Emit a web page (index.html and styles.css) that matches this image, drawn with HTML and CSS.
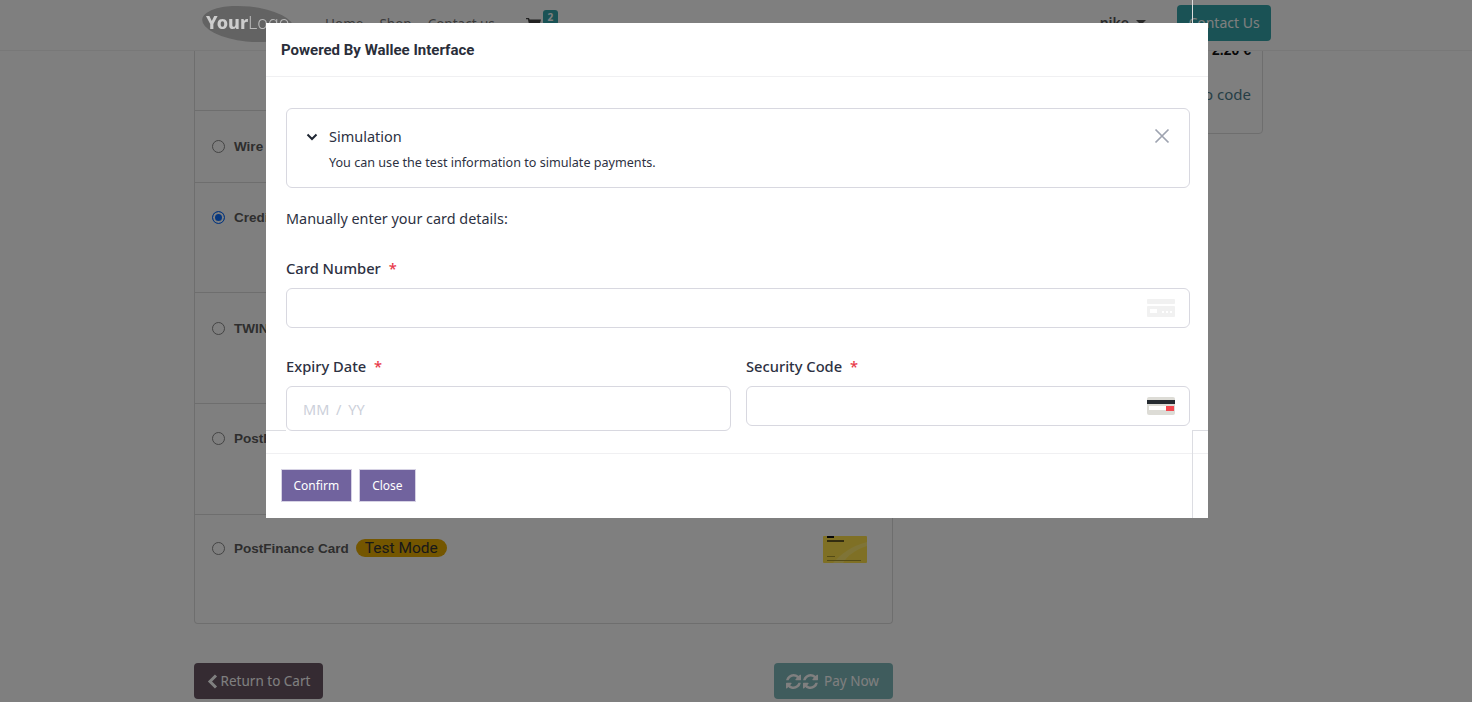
FILE: index.html
```html
<!DOCTYPE html>
<html lang="en">
<head>
    <meta charset="UTF-8">
    <title>Checkout - Payment</title>
    <link rel="stylesheet" href="styles.css">
</head>
<body>
    <header class="site-header">
        <svg class="logo" width="92" height="42" viewBox="0 0 92 42">
            <ellipse cx="46" cy="21" rx="46" ry="17.5" transform="rotate(6 46 21)" fill="#636363"/>
            <text x="4" y="26" class="logo-bold">Your</text>
            <text x="46" y="26" class="logo-thin">Logo</text>
        </svg>
        <nav class="main-nav">
            <a href="#">Home</a>
            <a href="#">Shop</a>
            <a href="#">Contact us</a>
        </nav>
        <div class="cart">
            <svg width="15" height="14" viewBox="0 0 15 14">
                <path d="M0 1h3l.6 1.6H15l-1.6 6H4.6l.3 1.2h8.6v1.2H3.8L1.9 2.2H0z" fill="#444"/>
                <circle cx="5.2" cy="12.6" r="1.3" fill="#444"/>
                <circle cx="12" cy="12.6" r="1.3" fill="#444"/>
            </svg>
            <span class="cart-count">2</span>
        </div>
        <div class="user-menu">nike <span class="caret"></span></div>
        <a class="contact-btn" href="#">Contact Us</a>
    </header>

    <main class="checkout">
        <div class="pay-column">
            <div class="pay-list">
                <div class="pay-row row-first"></div>
                <div class="pay-row row-wire">
                    <span class="radio"></span><b>Wire Transfer</b>
                </div>
                <div class="pay-row row-credit">
                    <span class="radio radio-on"></span><b>Credit Card</b>
                </div>
                <div class="pay-row">
                    <span class="radio"></span><b>TWINT</b>
                </div>
                <div class="pay-row row-post">
                    <span class="radio"></span><b>PostFinance E-Finance</b>
                </div>
                <div class="pay-row row-last">
                    <span class="radio"></span><b>PostFinance Card</b>
                    <span class="test-badge">Test Mode</span>
                    <svg class="pf-card" width="44" height="27" viewBox="0 0 44 27">
                        <rect width="44" height="27" rx="1" fill="#ffe14a"/>
                        <rect x="4" y="0" width="7" height="2" fill="#111"/>
                        <rect x="4" y="4" width="17" height="2" fill="#665a20"/>
                        <path d="M10 27C18 18 28 10 44 6V10C32 14 24 20 20 27z" fill="#ffe96e"/>
                        <rect x="4" y="20" width="8" height="1" fill="#a8962c"/>
                        <rect x="4" y="24" width="34" height="1" fill="#a8962c"/>
                    </svg>
                </div>
            </div>
            <div class="pay-actions">
                <a class="btn-return" href="#">
                    <svg width="11" height="15" viewBox="0 0 11 15"><path d="M9 1.500 3 7.500l6 6" fill="none" stroke="#fff" stroke-width="3"/></svg>
                    Return to Cart
                </a>
                <a class="btn-pay" href="#">
                    <svg width="15" height="15" viewBox="0 0 1536 1536"><use href="#refresh"/></svg>
                    <svg width="15" height="15" viewBox="0 0 1536 1536"><use href="#refresh"/></svg>
                    Pay Now
                </a>
            </div>
        </div>
        <aside class="summary">
            <div class="summary-total"><b>Total</b><b>2.20 €</b></div>
            <a class="promo-link" href="#">I have a promo code</a>
        </aside>
    </main>

    <svg class="svg-defs" width="0" height="0">
        <defs>
            <path id="refresh" fill="#fff" d="M1511 928q0 5-1 7-64 268-268 434.5t-478 166.5q-146 0-282.5-55t-243.5-157l-129 129q-19 19-45 19t-45-19-19-45v-448q0-26 19-45t45-19h448q26 0 45 19t19 45-19 45l-137 137q71 66 161 102t187 36q134 0 250-65t186-179q11-17 53-117 8-23 30-23h192q13 0 22.5 9.5t9.5 22.5zm25-800v448q0 26-19 45t-45 19h-448q-26 0-45-19t-19-45 19-45l138-138q-148-137-349-137-134 0-250 65t-186 179q-11 17-53 117-8 23-30 23h-199q-13 0-22.5-9.5t-9.5-22.5v-7q65-268 270-434.5t480-166.5q146 0 284 55.5t245 156.5l130-129q19-19 45-19t45 19 19 45z"/>
        </defs>
    </svg>

    <div class="backdrop"></div>
    <span class="frame-line-top"></span>

    <div class="modal">
        <div class="modal-header">Powered By Wallee Interface</div>
        <div class="modal-body">
            <div class="sim-box">
                <svg class="sim-chevron" width="12" height="8" viewBox="0 0 12 8"><path d="M1.500 1.500 6 6l4.500-4.500" fill="none" stroke="#1f2733" stroke-width="2"/></svg>
                <div class="sim-text">
                    <div class="sim-title">Simulation</div>
                    <div class="sim-note">You can use the test information to simulate payments.</div>
                </div>
                <svg class="sim-close" width="16" height="16" viewBox="0 0 16 16"><path d="M1.500 1.500l13 13m0-13-13 13" fill="none" stroke="#9ea3b0" stroke-width="1.700"/></svg>
            </div>
            <p class="manual-note">Manually enter your card details:</p>
            <label class="field-label">Card Number <em>*</em></label>
            <div class="input-wrap">
                <input class="field-input" type="text">
                <svg class="input-icon" width="28" height="18" viewBox="0 0 28 18">
                    <rect width="28" height="5" rx="1" fill="#f1f1f1"/>
                    <rect y="7" width="28" height="11" rx="1" fill="#f1f1f1"/>
                    <rect x="3" y="10" width="7" height="4" fill="#fff"/>
                    <rect x="15" y="12" width="2" height="2" fill="#fff"/>
                    <rect x="19" y="12" width="2" height="2" fill="#fff"/>
                    <rect x="23" y="12" width="2" height="2" fill="#fff"/>
                </svg>
            </div>
            <div class="field-cols">
                <div class="field-col">
                    <label class="field-label">Expiry Date <em>*</em></label>
                    <input class="field-input input-tall" type="text" placeholder="MM / YY">
                </div>
                <div class="field-col">
                    <label class="field-label">Security Code <em>*</em></label>
                    <div class="input-wrap">
                        <input class="field-input" type="text">
                        <svg class="input-icon" width="28" height="18" viewBox="0 0 28 18">
                            <rect width="28" height="18" rx="2" fill="#dddcd6"/>
                            <rect y="3" width="28" height="4" fill="#252a30"/>
                            <rect x="2" y="9" width="18" height="4" fill="#fff"/>
                            <rect x="19" y="9" width="8" height="5" fill="#f4474f"/>
                        </svg>
                    </div>
                </div>
            </div>
        </div>
        <div class="modal-footer">
            <button class="btn-modal" type="button">Confirm</button>
            <button class="btn-modal btn-close" type="button">Close</button>
        </div>
        <span class="frame-edge"></span>
        <span class="frame-edge-left"></span>
    </div>
</body>
</html>
```

FILE: styles.css
```css
* {
    box-sizing: border-box;
}
html, body {
    height: 100%;
}
body {
    margin: 0;
    overflow: hidden;
    background: #fff;
    color: #333;
    font-family: "Noto Sans", sans-serif;
    font-size: 14px;
}
a {
    text-decoration: none;
}

/* page behind the dialog */
.site-header {
    position: relative;
    display: flex;
    align-items: center;
    height: 51px;
    padding: 0 201px 5px 202px;
    border-bottom: 1px solid #f0f0f0;
    background: #fff;
}
.logo {
    position: relative;
    z-index: 3;
    flex: none;
    margin-top: 3px;
}
.logo-bold {
    font-family: "Noto Sans", sans-serif;
    font-size: 18px;
    font-weight: 800;
    fill: #cdcdcd;
}
.logo-thin {
    font-family: "Noto Sans", sans-serif;
    font-size: 18px;
    font-weight: 300;
    fill: #b8b8b8;
}
.main-nav {
    display: flex;
    gap: 16px;
    margin: 2px 0 0 31px;
    font-size: 13.500px;
}
.main-nav a {
    color: #777;
}
.cart {
    display: flex;
    align-items: flex-start;
    gap: 2px;
    align-self: flex-start;
    margin-left: 31px;
    padding-top: 10px;
}
.cart svg {
    margin-top: 7px;
}
.cart-count {
    width: 15px;
    height: 15px;
    border-radius: 3px;
    background: #35a5aa;
    color: #fff;
    font-size: 10px;
    font-weight: 700;
    line-height: 15px;
    text-align: center;
}
.user-menu {
    display: flex;
    align-items: center;
    gap: 7px;
    margin-left: auto;
    margin-right: 31px;
    font-weight: 600;
    color: #555;
}
.caret {
    border-top: 5px solid #555;
    border-left: 5px solid transparent;
    border-right: 5px solid transparent;
}
.contact-btn {
    width: 94px;
    height: 36px;
    border-radius: 4px;
    background: #35a5aa;
    color: #fff;
    font-size: 14px;
    line-height: 36px;
    text-align: center;
}
.checkout {
    display: flex;
    align-items: flex-start;
    padding: 0 209px 0 194px;
}
.pay-column {
    width: 699px;
}
.pay-list {
    border: 1px solid #ddd;
    border-top: 0;
    border-radius: 0 0 4px 4px;
}
.pay-row {
    position: relative;
    display: flex;
    align-items: flex-start;
    height: 111px;
    padding: 25px 17px 0;
    border-bottom: 1px solid #ddd;
    font-family: "Liberation Sans", Arial, sans-serif;
    font-size: 13.500px;
    line-height: 20px;
}
.pay-row b {
    margin-top: 1px;
    color: #5c5c5c;
}
.row-first {
    height: 60px;
}
.row-wire {
    height: 72px;
}
.row-credit {
    height: 110px;
    padding-top: 24px;
}
.row-post {
    padding-top: 24px;
}
.row-last {
    height: 108px;
    padding-top: 23px;
    border-bottom: 0;
}
.radio {
    width: 13px;
    height: 13px;
    margin: 4px 9px 0 0;
    border: 1px solid #888;
    border-radius: 50%;
    background: #fff;
}
.radio-on {
    border-color: #0d6efd;
    background: #0d6efd;
    box-shadow: inset 0 0 0 2px #fff;
}
.test-badge {
    height: 18px;
    margin: 1px 0 0 7px;
    padding: 0 9px;
    border-radius: 9px;
    background: #e8ac00;
    color: #333;
    font-family: Roboto, sans-serif;
    font-size: 15.500px;
    line-height: 18px;
}
.pf-card {
    position: absolute;
    top: 21px;
    left: 628px;
}
.pay-actions {
    display: flex;
    justify-content: space-between;
    margin-top: 39px;
}
.btn-return, .btn-pay {
    display: flex;
    align-items: center;
    justify-content: center;
    height: 36px;
    border-radius: 4px;
    color: #fff;
    font-size: 13.500px;
}
.btn-return {
    gap: 3px;
    width: 129px;
    background: #6a5665;
}
.btn-pay {
    justify-content: flex-start;
    gap: 2px;
    width: 119px;
    padding-left: 12px;
    background: #7fb8ba;
}
.btn-pay svg:last-of-type {
    margin-right: 4px;
}
.summary {
    width: 331px;
    height: 134px;
    margin-left: auto;
    margin-top: -51px;
    padding: 39px 11px 0;
    border: 1px solid #ddd;
    border-radius: 4px;
}
.summary-total {
    display: flex;
    justify-content: space-between;
    font-family: "Liberation Sans", Arial, sans-serif;
    line-height: 20px;
    color: #111;
}
.promo-link {
    display: block;
    margin-top: 24px;
    color: #4d7d8c;
    font-size: 15px;
    text-align: right;
}

.svg-defs {
    position: absolute;
}

/* dialog */
.backdrop {
    position: fixed;
    inset: 0;
    z-index: 2;
    background: rgba(0, 0, 0, .5);
}
.frame-line-top {
    position: fixed;
    z-index: 3;
    top: 0;
    left: 1192px;
    width: 1px;
    height: 23px;
    background: #ddd;
}
.modal {
    position: fixed;
    z-index: 4;
    top: 23px;
    left: 266px;
    width: 942px;
    height: 495px;
    background: #fff;
    overflow: hidden;
    color: #2d3142;
}
.modal-header {
    height: 54px;
    padding-left: 15px;
    border-bottom: 1px solid #f0f0f2;
    font-family: Roboto, sans-serif;
    font-size: 15px;
    font-weight: 700;
    line-height: 54px;
    color: #2a2e3a;
}
.modal-body {
    height: 376px;
    padding: 31px 18px 0 20px;
    overflow: hidden;
}
.sim-box {
    display: flex;
    align-items: flex-start;
    height: 80px;
    padding: 17px 19px 0 20px;
    border: 1px solid #d8d8e0;
    border-radius: 6px;
}
.sim-chevron {
    flex: none;
    margin: 7px 0 0 -1px;
}
.sim-text {
    flex: 1;
    margin-left: 11px;
}
.sim-title {
    font-size: 14.500px;
    line-height: 20px;
}
.sim-note {
    margin-top: 8px;
    font-size: 12.600px;
    line-height: 18px;
}
.sim-close {
    margin-top: 2px;
}
.manual-note {
    margin: 21px 0 0;
    font-size: 14.400px;
    line-height: 20px;
}
.field-label {
    display: block;
    margin: 29px 0 10px;
    font-size: 14.700px;
    font-weight: 500;
    line-height: 20px;
}
.field-label em {
    margin-left: 4px;
    color: #e8394a;
    font-style: normal;
}
.input-wrap {
    position: relative;
}
.field-input {
    display: block;
    width: 100%;
    height: 40px;
    padding: 0 16px;
    border: 1px solid #d8d8e0;
    border-radius: 6px;
    background: #fff;
    font-family: "Noto Sans", sans-serif;
    font-size: 14.500px;
}
.field-input::placeholder {
    color: #ccd0da;
    word-spacing: 3px;
}
.input-tall {
    height: 45px;
}
.input-icon {
    position: absolute;
    top: 11px;
    right: 15px;
}
.field-cols {
    display: flex;
    gap: 15px;
}
.field-cols .field-label {
    margin: 28px 0 10px;
}
.field-col {
    width: 445px;
}
.field-col + .field-col {
    width: 444px;
}
.modal-footer {
    display: flex;
    gap: 7px;
    height: 65px;
    padding: 15px;
    border-top: 1px solid #f0f0f2;
}
.btn-modal {
    height: 33px;
    padding: 0 11.500px;
    border: 1px solid #d6d2e4;
    background: #71639e;
    color: #fff;
    font-family: "Noto Sans", sans-serif;
    font-size: 12px;
}
.btn-close {
    padding: 0 12.500px;
}
.frame-edge {
    position: absolute;
    top: 407px;
    left: 926px;
    width: 16px;
    height: 88px;
    border-top: 1px solid #dcdde2;
    border-left: 1px solid #dcdde2;
}
.frame-edge-left {
    position: absolute;
    top: 407px;
    left: 0;
    width: 20px;
    border-top: 1px solid #dcdde2;
}
```
